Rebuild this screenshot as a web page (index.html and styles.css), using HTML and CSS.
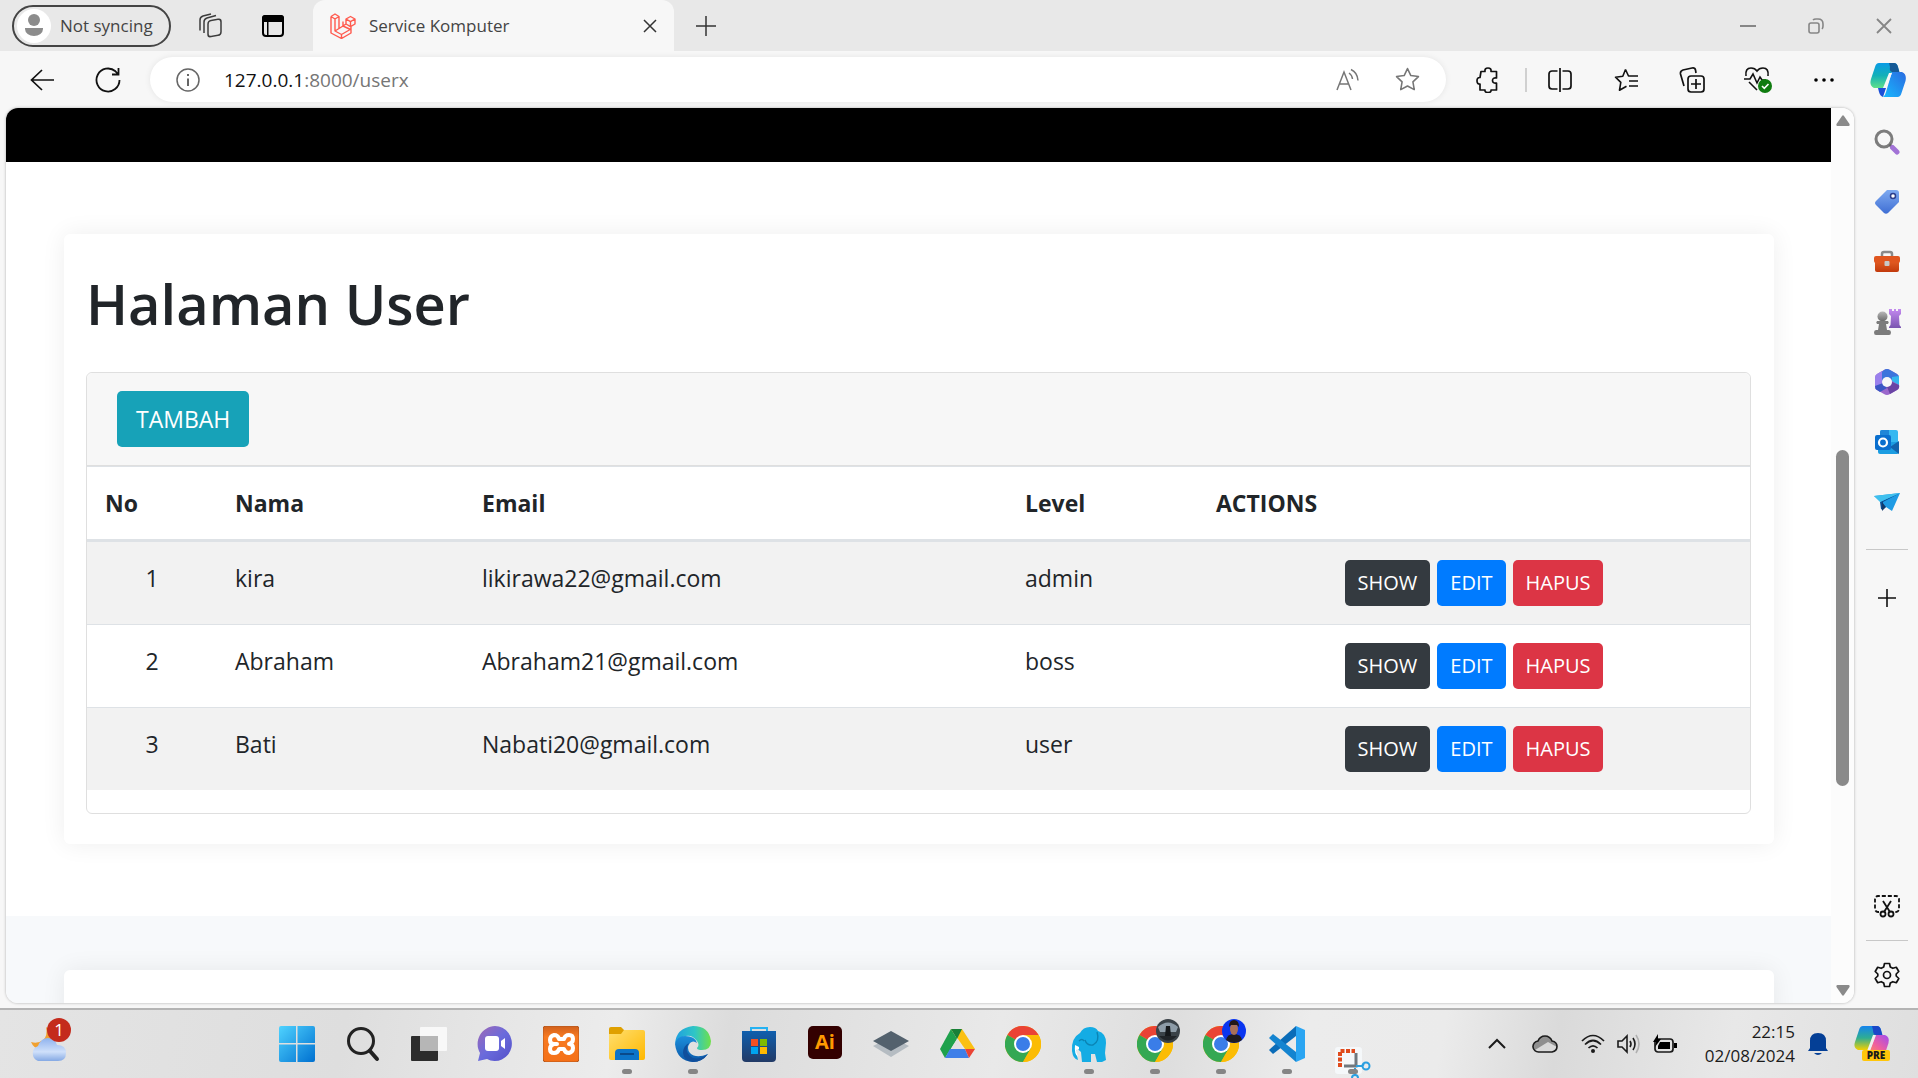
FILE: index.html
```html
<!DOCTYPE html>
<html lang="id">
<head>
<meta charset="utf-8">
<title>Service Komputer</title>
<link rel="stylesheet" href="styles.css">
</head>
<body>
<svg class="defs" aria-hidden="true">
  <defs>
    <linearGradient id="g-win" x1="0" y1="0" x2="1" y2="1"><stop offset="0" stop-color="#4fd3ff"/><stop offset="1" stop-color="#0070d0"/></linearGradient>
    <linearGradient id="g-cp1" x1="0" y1="0" x2="0" y2="1"><stop offset="0" stop-color="#0a9be6"/><stop offset=".5" stop-color="#12b0b8"/><stop offset="1" stop-color="#5fe08a"/></linearGradient>
    <linearGradient id="g-cp2" x1="1" y1="0" x2="0" y2="1"><stop offset="0" stop-color="#2a6be0"/><stop offset="1" stop-color="#17b9ff"/></linearGradient>
    <linearGradient id="g-pre1" x1="0" y1="0" x2="0" y2="1"><stop offset="0" stop-color="#1584ee"/><stop offset=".5" stop-color="#2fae92"/><stop offset="1" stop-color="#f4d000"/></linearGradient>
    <linearGradient id="g-pre2" x1="1" y1="0" x2="0" y2="1"><stop offset="0" stop-color="#a04bf0"/><stop offset=".6" stop-color="#ee5fa0"/><stop offset="1" stop-color="#ff8a5c"/></linearGradient>
    <linearGradient id="g-purple" x1="0" y1="0" x2="0" y2="1"><stop offset="0" stop-color="#c48af0"/><stop offset="1" stop-color="#7a55b0"/></linearGradient>
    <linearGradient id="g-grey" x1="0" y1="0" x2="0" y2="1"><stop offset="0" stop-color="#b8b8b8"/><stop offset="1" stop-color="#6a6a6a"/></linearGradient>
    <linearGradient id="g-tag" x1="0" y1="0" x2="0" y2="1"><stop offset="0" stop-color="#7eaaf0"/><stop offset="1" stop-color="#3f6ed4"/></linearGradient>
    <linearGradient id="g-box" x1="0" y1="0" x2="0" y2="1"><stop offset="0" stop-color="#ee6a2c"/><stop offset="1" stop-color="#c23a0c"/></linearGradient>
    <linearGradient id="g-chat" x1="0" y1="0" x2="1" y2="1"><stop offset="0" stop-color="#a068b4"/><stop offset=".5" stop-color="#6a6bdc"/><stop offset="1" stop-color="#5450c8"/></linearGradient>
    <linearGradient id="g-folder" x1="0" y1="0" x2="1" y2="1"><stop offset="0" stop-color="#ffdf70"/><stop offset="1" stop-color="#ffb800"/></linearGradient>
    <linearGradient id="g-cloud" x1="0" y1="0" x2="0" y2="1"><stop offset="0" stop-color="#8fb2ee"/><stop offset=".6" stop-color="#cfe0fa"/><stop offset="1" stop-color="#85a9e4"/></linearGradient>
    <linearGradient id="g-edge1" x1="0" y1="0" x2="1" y2="0"><stop offset="0" stop-color="#1f9fe0"/><stop offset=".55" stop-color="#2fc6c6"/><stop offset="1" stop-color="#6fe04a"/></linearGradient>
    <linearGradient id="g-edge2" x1="0" y1="0" x2="0" y2="1"><stop offset="0" stop-color="#1c8fdc"/><stop offset="1" stop-color="#0c58a8"/></linearGradient>
    <linearGradient id="g-store" x1="0" y1="0" x2="0" y2="1"><stop offset="0" stop-color="#0f5fae"/><stop offset="1" stop-color="#223a66"/></linearGradient>
    <linearGradient id="g-xampp" x1="0" y1="0" x2="0" y2="1"><stop offset="0" stop-color="#d0601c"/><stop offset=".3" stop-color="#f87a20"/><stop offset="1" stop-color="#f47018"/></linearGradient>
  </defs>
  <symbol id="chrome" viewBox="0 0 36 36">
    <circle cx="18" cy="18" r="18" fill="#fbbc04"/>
    <path d="M18 18 2.400 9A18 18 0 0 1 33.600 9z" fill="#ea4335"/>
    <path d="M33.600 9H18l-8 4z" fill="#ea4335"/>
    <path d="M2.400 9A18 18 0 0 0 18 36l7.800-13.500L18 18z" fill="#34a853"/>
    <path d="M18 36l7.800-13.500V13.500L18 9h15.600A18 18 0 0 1 18 36z" fill="#fbbc04"/>
    <circle cx="18" cy="18" r="9" fill="#fff"/><circle cx="18" cy="18" r="7" fill="#3a7de8"/>
  </symbol>
</svg>

<header class="tabbar">
  <button class="profile"><span class="avatar"><svg viewBox="0 0 34 34"><circle cx="17" cy="17" r="17" fill="#fff"/><circle cx="17" cy="11" r="6" fill="#8c8c8c"/><path d="M8 19h18v1a9 7 0 0 1-18 0z" fill="#8c8c8c"/></svg></span>Not syncing</button>
  <button class="icon-btn tab-tool" aria-label="Workspaces"><svg width="26" height="26" viewBox="0 0 26 26" fill="none" stroke="#3c3c3c" stroke-width="1.500"><rect x="11" y="7" width="13" height="16" rx="3" transform="skewY(-10) translate(0 3)"/><path d="M7 20V9q0-3 3-4l9-2.500M3 17.500V7q0-3 3-4l8-2"/></svg></button>
  <button class="icon-btn tab-tool" aria-label="Tab actions"><svg width="24" height="24" viewBox="0 0 24 24"><rect x="2" y="2" width="20" height="20" rx="3" fill="none" stroke="#000" stroke-width="2"/><path d="M1 8V4a3 3 0 0 1 3-3h16a3 3 0 0 1 3 3v4zM6 8h1.500v14H6z"/></svg></button>
  <div class="tab">
    <svg width="26" height="26" viewBox="0 0 26 26" fill="none" stroke="#ff5a4e" stroke-width="1.400" stroke-linejoin="round"><path d="M1 3.500 5 1l4 2.500v12l4-2.500V8.500M1 3.500V20l10.500 5.500L21 20v-6M1 3.500 5 6l4-2.500M5 6v12l6.500 3.500L21 16M16 6l4.500-2.500L25 6v5l-4.500 2.700L16 11zM16 6l4.500 2.700L25 6M20.500 8.700v5M9 15.500l-4 2.500M13 13l7.500 3.500M11.500 21.500v4M16 11l-3 2"/></svg>
    <span class="tab-title">Service Komputer</span>
    <button class="icon-btn" aria-label="Close tab"><svg width="14" height="14" viewBox="0 0 14 14" stroke="#333" stroke-width="1.500"><path d="M1 1l12 12M13 1 1 13"/></svg></button>
  </div>
  <button class="icon-btn tab-tool" aria-label="New tab"><svg width="20" height="20" viewBox="0 0 20 20" stroke="#333" stroke-width="1.500"><path d="M10 0v20M0 10h20"/></svg></button>
  <div class="window-controls">
    <button class="icon-btn" aria-label="Minimize"><svg width="16" height="16" viewBox="0 0 16 16" stroke="#868686" stroke-width="2"><path d="M0 8h16"/></svg></button>
    <button class="icon-btn" aria-label="Restore"><svg width="16" height="16" viewBox="0 0 16 16" fill="none" stroke="#868686" stroke-width="1.600"><rect x="1" y="5" width="10" height="10" rx="2"/><path d="M5 2q1-1 3-1h2q5 0 5 5v2q0 2-1 3"/></svg></button>
    <button class="icon-btn" aria-label="Close"><svg width="16" height="16" viewBox="0 0 16 16" stroke="#868686" stroke-width="1.800"><path d="M1 1l14 14M15 1 1 15"/></svg></button>
  </div>
</header>

<div class="toolbar">
  <button class="icon-btn nav-btn" aria-label="Back"><svg width="24" height="22" viewBox="0 0 24 22" fill="none" stroke="#111" stroke-width="1.700"><path d="M12 1 1.500 11 12 21M1.500 11H24"/></svg></button>
  <button class="icon-btn nav-btn" aria-label="Reload"><svg width="26" height="26" viewBox="0 0 26 26" fill="none" stroke="#111" stroke-width="1.800"><path d="M24.500 13A11.500 11.500 0 1 1 20.500 4.300L23.500 7.500M23.500 1v6.500H17"/></svg></button>
  <div class="address">
    <svg width="24" height="24" viewBox="0 0 24 24" fill="none" stroke="#666" stroke-width="1.500"><circle cx="12" cy="12" r="11"/><path d="M12 10.500v7.500M12 6v2" stroke-width="2"/></svg>
    <span class="url"><b>127.0.0.1</b>:8000/userx</span>
    <button class="icon-btn" aria-label="Read aloud"><svg width="24" height="24" viewBox="0 0 24 24" fill="none" stroke="#767676" stroke-width="1.500"><path d="M1 22 8 4l7 18M3.500 16h9M13 5q3 2 3.500 6M15 1.500q6.500 3 7 11"/></svg></button>
    <button class="icon-btn" aria-label="Favorite"><svg width="25" height="25" viewBox="0 0 24 24" fill="none" stroke="#767676" stroke-width="1.500" stroke-linejoin="round"><path d="m12 1.500 3.200 6.700 7.300 1-5.300 5.100 1.300 7.400L12 18.200l-6.500 3.500 1.300-7.400L1.500 9.200l7.300-1z"/></svg></button>
  </div>
  <button class="icon-btn ext" aria-label="Extensions"><svg width="24" height="26" viewBox="0 0 24 26" fill="none" stroke="#111" stroke-width="1.700" stroke-linejoin="round"><path d="M5 4.500h4q-.500-3.500 3-3.500t3 3.500h5.500V11q-4-.500-4 2.500t4 2.500v7H15q.500 2.500-3 2.500T9 23H4v-6q-3 .300-3-3.200T4 10.500z"/></svg></button>
  <span class="separator"></span>
  <button class="icon-btn tool" aria-label="Split screen"><svg width="24" height="24" viewBox="0 0 24 24" fill="none" stroke="#111" stroke-width="1.700"><path d="M9.500 3H4a3 3 0 0 0-3 3v12a3 3 0 0 0 3 3h5.500M14.500 3H20a3 3 0 0 1 3 3v12a3 3 0 0 1-3 3h-5.500M12 0v24"/></svg></button>
  <button class="icon-btn tool" aria-label="Favorites"><svg width="25" height="24" viewBox="0 0 25 24" fill="none" stroke="#111" stroke-width="1.600" stroke-linejoin="round"><path d="M11.500 1.500 8.800 8.200l-7.300 1 5.300 5.100-1.300 7.900 7-4M11.500 1.500 14.500 8H24M15 13h9M15 18h9"/></svg></button>
  <button class="icon-btn tool" aria-label="Collections"><svg width="26" height="26" viewBox="0 0 26 26" fill="none" stroke="#111" stroke-width="1.700"><rect x="9" y="9" width="16" height="16" rx="3"/><path d="M17 12v10M12 17h10M5 19 1.500 7Q1 4 4 3l9-2q3-.500 3.500 2l.500 3"/></svg></button>
  <button class="icon-btn tool" aria-label="Browser essentials"><svg width="28" height="28" viewBox="0 0 28 28" fill="none" stroke="#111" stroke-width="1.600"><path d="M2 10Q1 2 7 2q4 0 6 3 2-3 6-3 6 0 5 8M0 13h6l3-5 4 9 3-6 2 3h4M5 16l8 8"/><circle cx="21" cy="20" r="7" fill="#107c10" stroke="none"/><path d="m18 20 2.300 2.300L24.500 18" stroke="#fff"/></svg></button>
  <button class="icon-btn tool" aria-label="Settings and more"><svg width="20" height="6" viewBox="0 0 20 6"><circle cx="2" cy="3" r="1.800"/><circle cx="10" cy="3" r="1.800"/><circle cx="18" cy="3" r="1.800"/></svg></button>
  <button class="icon-btn copilot" aria-label="Copilot"><svg width="36" height="36" viewBox="0 0 36 34"><path d="M9 0h15q3 0 4 4l1 5h-7L15 25H4q-5-2-3-9L5 4Q6 0 9 0z" fill="url(#g-cp1)"/><path d="M19 0h5q3 0 4 4l1.500 5H22q-3-1-2-5z" fill="#155a96"/><path d="M8 25h8l-3 9q-3-1-4-5z" fill="#1a4fd8"/><path d="M22 9h10q5 2 3.500 9l-4 12q-1 4-4 4H13q2-1 3-5z" fill="url(#g-cp2)"/><path d="M19 10h3l-6 15h-3z" fill="#f7f7f7"/></svg></button>
</div>

<div class="workspace">
  <div class="viewport">
    <main class="page">
      <div class="navband"></div>
      <section class="section">
        <div class="panel">
          <h1>Halaman User</h1>
          <div class="card">
            <div class="card-header"><button class="btn btn-info">TAMBAH</button></div>
            <table>
              <colgroup><col class="c-no"><col class="c-nama"><col class="c-email"><col class="c-level"><col class="c-act"></colgroup>
              <thead><tr><th>No</th><th>Nama</th><th>Email</th><th>Level</th><th>ACTIONS</th></tr></thead>
              <tbody>
                <tr><td class="center">1</td><td>kira</td><td>likirawa22@gmail.com</td><td>admin</td><td><div class="actions"><button class="btn btn-sm btn-dark">SHOW</button><button class="btn btn-sm btn-primary">EDIT</button><button class="btn btn-sm btn-danger">HAPUS</button></div></td></tr>
                <tr><td class="center">2</td><td>Abraham</td><td>Abraham21@gmail.com</td><td>boss</td><td><div class="actions"><button class="btn btn-sm btn-dark">SHOW</button><button class="btn btn-sm btn-primary">EDIT</button><button class="btn btn-sm btn-danger">HAPUS</button></div></td></tr>
                <tr><td class="center">3</td><td>Bati</td><td>Nabati20@gmail.com</td><td>user</td><td><div class="actions"><button class="btn btn-sm btn-dark">SHOW</button><button class="btn btn-sm btn-primary">EDIT</button><button class="btn btn-sm btn-danger">HAPUS</button></div></td></tr>
              </tbody>
            </table>
          </div>
        </div>
      </section>
      <section class="section section-alt"><div class="panel panel-next"></div></section>
    </main>
    <div class="scrollbar">
      <svg width="14" height="11" viewBox="0 0 14 11" fill="#8a8a8a"><path d="M6 1q1-1.500 2 0l5.500 8q.500 2-1 2h-11q-1.500 0-1-2z"/></svg>
      <span class="thumb"></span>
      <svg width="14" height="11" viewBox="0 0 14 11" fill="#8a8a8a"><path d="M6 10q1 1.500 2 0l5.500-8q.500-2-1-2h-11Q0 0 .500 2z"/></svg>
    </div>
  </div>

  <aside class="sidebar">
    <button class="icon-btn" aria-label="Search"><svg width="26" height="26" viewBox="0 0 26 26" fill="none"><circle cx="10" cy="10" r="8" stroke="#7c7c7c" stroke-width="3"/><path d="m15.500 15.500 3 3" stroke="#666" stroke-width="2.500"/><path d="m18.500 18.500 4.500 4.500" stroke="#a273d6" stroke-width="5" stroke-linecap="round"/></svg></button>
    <button class="icon-btn" aria-label="Shopping"><svg width="26" height="26" viewBox="0 0 26 26"><path d="M13 1h9q3 0 3 3v9L14 24q-2 1.500-4 0L2 16q-2-2 0-4z" fill="url(#g-tag)"/><circle cx="19" cy="7" r="2.500" fill="#fff" stroke="#2c3e8c" stroke-width="1.500"/></svg></button>
    <button class="icon-btn" aria-label="Tools"><svg width="28" height="24" viewBox="0 0 28 24"><path d="M9 7V4q0-2 2-2h6q2 0 2 2v3" fill="none" stroke="#8a8a8a" stroke-width="2.500"/><rect x="2" y="7" width="24" height="15" rx="2" fill="url(#g-box)"/><rect x="1" y="6" width="26" height="7" rx="2" fill="#e0561f"/><rect x="11.500" y="11" width="5" height="5" rx="1" fill="#c8c8c8"/></svg></button>
    <button class="icon-btn" aria-label="Games"><svg width="28" height="28" viewBox="0 0 28 28"><path d="M16 1h3v2h2V1h2v2h2V1h3v5l-2 2 .500 9 1.500 2v1H16v-1l1.500-2L18 8l-2-2z" fill="url(#g-purple)"/><circle cx="9.500" cy="8.500" r="5" fill="url(#g-grey)"/><path d="M4 13h11q1.500 1.500 0 3h-2l1 6h2q2 0 2 2.500T16 27H3q-2 0-2-2.500T3 22h2l1-6H4q-1.500-1.500 0-3z" fill="#7c7c7c"/></svg></button>
    <button class="icon-btn" aria-label="Microsoft 365"><svg width="26" height="28" viewBox="0 0 26 28"><path d="M10 2q3-2 6 0l7 4q2 1 2 4v8q0 3-2 4l-7 4q-3 2-6 0l-7-4q-2-1-2-4v-8q0-3 2-4z" fill="#9b68cc"/><path d="M1 17V10q0-3 2-4l5-3v16l-5 3q-2-1-2-5z" fill="#9a80ec"/><path d="M10 2q3-2 6 0l7 4q2 1 2 4v6l-7-4-5-3-5 4V4z" fill="#3c74dc"/><path d="m18 9 7-1v9l-7-4z" fill="#35b6ee"/><path d="m18 14 7 3q1 3-2 5l-7 4-3-7z" fill="#6a44a4"/><path d="M1 18l8-3 4 5-7 4-3-2q-2-1-2-4z" fill="#3b56c4"/><circle cx="13" cy="14" r="5" fill="#f7f7f7"/></svg></button>
    <button class="icon-btn" aria-label="Outlook"><svg width="26" height="26" viewBox="0 0 26 26"><rect x="6" y="1" width="18" height="20" rx="2" fill="#35b8f1"/><path d="M6 3q0-2 2-2h7v7H6z" fill="#1f86d8"/><path d="M4 13h21v10q0 2-2 2H6q-2 0-2-2z" fill="#1b9de2"/><path d="m25 12-9 6 9 7z" fill="#1263ac"/><rect x="1" y="6" width="16" height="15" rx="2" fill="#0a6fce"/><circle cx="9" cy="13.500" r="4" fill="none" stroke="#fff" stroke-width="2.200"/></svg></button>
    <button class="icon-btn" aria-label="Drop"><svg width="26" height="20" viewBox="0 0 26 20"><path d="M0 4 26 1 18 19l-6-4-4 3-1-8z" fill="#1f9be4"/><path d="M26 1 9 10v8l-2-1-1-7z" fill="#0b4f94"/><path d="M0 4 26 1 6 10z" fill="#3fc0ee"/><path d="m12 15-4 4V10z" fill="#123a6c"/></svg></button>
    <hr>
    <button class="icon-btn" aria-label="Customize"><svg width="18" height="18" viewBox="0 0 18 18" stroke="#111" stroke-width="1.600"><path d="M9 0v18M0 9h18"/></svg></button>
    <span class="grow"></span>
    <button class="icon-btn" aria-label="Screenshot"><svg width="26" height="24" viewBox="0 0 26 24" fill="none" stroke="#111" stroke-width="1.800"><path d="M5 18H4a3 3 0 0 1-3-3V5a3 3 0 0 1 3-3h18a3 3 0 0 1 3 3v10a3 3 0 0 1-3 3h-1" stroke-dasharray="4 2"/><path d="m9 7 7 11M17 7l-7 11"/><circle cx="9" cy="20" r="2.500"/><circle cx="17" cy="20" r="2.500"/></svg></button>
    <hr>
    <button class="icon-btn" aria-label="Settings"><svg width="26" height="26" viewBox="0 0 26 26" fill="none" stroke="#111" stroke-width="1.700" stroke-linejoin="round"><path d="M10.500 1.500h5l.800 3.500 2.500 1.300 3.500-1 2.500 4.200-2.600 2.500v2l2.600 2.500-2.500 4.200-3.500-1-2.500 1.300-.800 3.500h-5L9.700 21l-2.500-1.300-3.500 1-2.500-4.200L3.800 14v-2L1.200 9.500l2.500-4.200 3.500 1L9.700 5z"/><circle cx="13" cy="13" r="3.500"/></svg></button>
  </aside>
</div>

<footer class="taskbar">
  <button class="icon-btn weather" aria-label="Weather"><svg width="36" height="36" viewBox="0 0 36 36"><path d="M16 1q2 9-3 13T1 16q3 7 9 7l12-3q4-12-6-19z" fill="#f0a030"/><path d="M8 35a8 8 0 0 1 0-15q3-8 10-8t9 7q9 0 9 8t-8 8z" fill="url(#g-cloud)"/></svg><span class="badge">1</span></button>
  <nav class="apps">
    <button class="icon-btn" aria-label="Start"><svg width="36" height="36" viewBox="0 0 36 36" fill="url(#g-win)"><path d="M2 0h15v17H0V2q0-2 2-2zM18.500 0H34q2 0 2 2v15H18.500zM0 18.500h17V36H2q-2 0-2-2zM18.500 18.500H36V34q0 2-2 2H18.500z"/></svg></button>
    <button class="icon-btn" aria-label="Search"><svg width="36" height="36" viewBox="0 0 36 36" fill="none" stroke="#222"><circle cx="16" cy="15" r="12.500" stroke-width="3"/><path d="m25 25 7 8" stroke-width="4" stroke-linecap="round"/></svg></button>
    <button class="icon-btn" aria-label="Task view"><svg width="36" height="36" viewBox="0 0 36 36"><rect x="0" y="10" width="27" height="25" rx="1" fill="#2c2c2c"/><rect x="9" y="1" width="27" height="24" rx="1" fill="#f8f8f8"/><path d="M9 10h18v15H9z" fill="#b6b6b6"/></svg></button>
    <button class="icon-btn" aria-label="Chat"><svg width="36" height="36" viewBox="0 0 36 36"><path d="M18 0a17 17.500 0 1 1-8 33L1 35l2-8A18 18 0 0 1 18 0z" fill="url(#g-chat)"/><rect x="8" y="10" width="14" height="15" rx="3" fill="#fff"/><path d="m24 15 4-3v11l-4-3z" fill="#fff"/></svg></button>
    <button class="icon-btn" aria-label="XAMPP"><svg width="36" height="36" viewBox="0 0 36 36"><rect x="0" y="0" width="36" height="36" rx="3" fill="url(#g-xampp)" stroke="#b4561c"/><path d="M16 13q-1-4-5-4-4 1-4 5t4 4q-4 1-4 5t4 4q4 0 5-4h5q1 4 5 4 4-1 4-5t-4-4q4-1 4-5t-4-4q-4 0-5 4zM11 18h3" fill="none" stroke="#fff" stroke-width="4" stroke-linejoin="round" stroke-linecap="round"/></svg></button>
    <button class="icon-btn running" aria-label="File Explorer"><svg width="36" height="36" viewBox="0 0 36 36"><path d="M0 3q0-2 2-2h10l4 4v8H0z" fill="#dfa000"/><path d="M0 8h12l3-4h19q2 0 2 2v26q0 2-2 2H2q-2 0-2-2z" fill="url(#g-folder)"/><path d="M6 34V27q0-4 4-4h16q4 0 4 4v7z" fill="#0c74c8"/><path d="M11 28h14" stroke="#0a4a8a" stroke-width="2"/></svg></button>
    <button class="icon-btn running" aria-label="Edge"><svg width="36" height="36" viewBox="0 0 36 36"><path d="M18 0q16 0 18 15 0 9-9 9-5 0-5-2 3-3 0-7-6-8-14-4Q2 14 0 18 1 2 18 0z" fill="url(#g-edge1)"/><path d="M0 18Q2 10 10 10q10 0 12 7-4-3-7 0-4 5 0 10 6 6 18 1-6 8-15 8Q2 35 0 18z" fill="url(#g-edge2)"/><path d="M14 17q-5 7 1 13t18-2q-6 8-15 8-9-1-10-9 0-7 6-10z" fill="#104f9c"/></svg></button>
    <button class="icon-btn" aria-label="Store"><svg width="36" height="36" viewBox="0 0 36 36"><path d="M10 7V2h16v5" fill="none" stroke="#25b2f2" stroke-width="2"/><path d="M1 5h34v27q0 4-4 4H5q-4 0-4-4z" fill="url(#g-store)"/><path d="M10 13h7v7h-7z" fill="#f25022"/><path d="M19 13h7v7h-7z" fill="#7fba00"/><path d="M10 21h7v7h-7z" fill="#00a4ef"/><path d="M19 21h7v7h-7z" fill="#ffb900"/></svg></button>
    <button class="icon-btn" aria-label="Illustrator"><svg width="36" height="36" viewBox="0 0 36 36"><rect x="1" y="0" width="34" height="33" rx="5" fill="#330000"/><text x="18" y="23" class="ai">Ai</text></svg></button>
    <button class="icon-btn" aria-label="Layers"><svg width="36" height="36" viewBox="0 0 36 36"><path d="m18 11 18 9-18 11L0 20z" fill="#b5bcc2"/><path d="m18 5 18 10-18 10L0 15z" fill="#53616d"/></svg></button>
    <button class="icon-btn" aria-label="Google Drive"><svg width="36" height="36" viewBox="0 0 36 36"><path d="M12 3 1 23l5 9 12-19z" fill="#1ea14c"/><path d="M23 3 12 3l14 20h10z" fill="#fbc012"/><path d="M12 3h11l-5 10z" fill="#188038"/><path d="M11 23h15l4 9H6z" fill="#3f7fe8"/><path d="M26 23h10l-6 9z" fill="#ea4335"/><path d="M18 13l6 10H12z" fill="#e2e2e2"/></svg></button>
    <button class="icon-btn" aria-label="Chrome"><svg width="36" height="36"><use href="#chrome"/></svg></button>
    <button class="icon-btn running" aria-label="Laragon"><svg width="36" height="36" viewBox="0 0 36 36"><path d="M9 7q3-6 10-6 6 0 8 4 8 2 8 12l-1 10 1 7-4 2h-5l-2-8h-4v8h-9l-1-10q-3-2-4-6l-1 5 2 9q-5-1-6-9Q0 12 9 7z" fill="#14ace4"/><path d="M26 6q3 9-4 13-6 1-8-5M8 15q3-3 5 0" fill="none" stroke="#0b84b4" stroke-width="1.400"/><path d="m4 19 4 2v2l-3 1 2 7q-4-3-3-12z" fill="#fff"/></svg></button>
    <button class="icon-btn running" aria-label="Chrome profile"><svg width="36" height="36"><use href="#chrome"/></svg><svg class="face" viewBox="0 0 24 24"><circle cx="12" cy="12" r="12" fill="#3a4248"/><path d="M2 8q10-9 20 0l-2 5H4z" fill="#8d9ca8"/><path d="M10 7h4l1 10H9z" fill="#15181b"/><path d="M3 17h18q-9 9-18 0z" fill="#202428"/></svg></button>
    <button class="icon-btn running" aria-label="Chrome profile 2"><svg width="36" height="36"><use href="#chrome"/></svg><svg class="face" viewBox="0 0 24 24"><circle cx="12" cy="12" r="12" fill="#0a35f0"/><path d="M4 21q1-6 8-6t8 6q-8 6-16 0z" fill="#201c20"/><ellipse cx="12" cy="10" rx="4" ry="6" fill="#a8705a"/><path d="M7 8q0-7 5-7t5 7l-2-2H9z" fill="#241818"/></svg></button>
    <button class="icon-btn running" aria-label="Visual Studio Code"><svg width="36" height="36" viewBox="0 0 36 36"><path d="m27 0 9 4v28l-9 4z" fill="#2aa5f2"/><path d="M27 0v10L4 28l-4-4z" fill="#0a6cb8"/><path d="m0 12 4-4 23 18v10z" fill="#1484d0"/></svg></button>
    <button class="icon-btn running snip" aria-label="Snipping Tool"><svg width="36" height="36" viewBox="0 0 36 36"><rect x="0" y="3" width="27" height="27" rx="3" fill="#f5f8fa"/><path d="M5 23V7h15" fill="none" stroke="#e04a1c" stroke-width="4" stroke-dasharray="4 1.500"/><path d="M21 9v13H9" fill="none" stroke="#70787e" stroke-width="3"/><path d="M21 22h6l2-2M20 24v8" fill="none" stroke="#2a9fe0" stroke-width="2"/><circle cx="31" cy="22" r="3.500" fill="none" stroke="#2a9fe0" stroke-width="2"/><circle cx="20" cy="34" r="3" fill="none" stroke="#2a9fe0" stroke-width="2"/></svg></button>
  </nav>
  <div class="tray">
    <button class="icon-btn" aria-label="Hidden icons"><svg width="18" height="12" viewBox="0 0 18 12" fill="none" stroke="#1b1b1b" stroke-width="2"><path d="m1 10 8-8 8 8"/></svg></button>
    <button class="icon-btn" aria-label="OneDrive"><svg width="26" height="18" viewBox="0 0 26 18"><path d="M7 17a5.500 5.500 0 0 1-1-11q2-5 7-5t7 5q5 1 5 5.500T20 17z" fill="#8f8f8f"/><path d="M3 15 16 7l9 5q0 5-5 5H7z" fill="#d9d9d9"/><path d="M7 17a5.500 5.500 0 0 1-1-11q2-5 7-5t7 5q5 1 5 5.500T20 17z" fill="none" stroke="#1b1b1b" stroke-width="1.600"/></svg></button>
    <button class="status" aria-label="Network, volume, battery">
      <svg width="24" height="20" viewBox="0 0 24 20" fill="none" stroke="#1b1b1b" stroke-width="1.700"><path d="M1 7q11-11 22 0M4 10.500q8-8 16 0M7.500 14q4.500-4.500 9 0"/><circle cx="12" cy="17" r="2" fill="#1b1b1b" stroke="none"/></svg>
      <svg width="24" height="20" viewBox="0 0 24 20" fill="none" stroke="#1b1b1b" stroke-width="1.600"><path d="M1 7h4l5-5v16l-5-5H1zM13 7q2 3 0 6M16 4q4 6 0 12"/><path d="M19 1q6 9 0 18" stroke="#b0b0b0"/></svg>
      <svg width="24" height="20" viewBox="0 0 24 20"><rect x="2" y="5" width="18" height="13" rx="3" fill="none" stroke="#1b1b1b" stroke-width="1.700"/><path d="M7 8h10v7H5v-3zM21 9h3v5h-3zM5 0 0 8h3l-1 5 6-8H5z"/></svg>
    </button>
    <button class="clock"><span>22:15</span><span>02/08/2024</span></button>
    <button class="icon-btn bell" aria-label="Notifications"><svg width="20" height="24" viewBox="0 0 20 24" fill="#043f96"><path d="M2 16V9q0-8 8-8t8 8v7l2 3H0zM6 21h8q-4 4-8 0z"/></svg></button>
    <button class="icon-btn pre" aria-label="Copilot preview"><svg width="36" height="36" viewBox="0 0 36 36"><path d="M9 0h14q3 0 4 4l1 5h-6L15 24H4q-5-2-3-8L5 4Q6 0 9 0z" fill="url(#g-pre1)"/><path d="M18 0h5q3 0 4 4l1.500 5H21q-2-1-2-5z" fill="#1a48c8"/><path d="M22 9h9q5 2 3.500 8l-3 9H15z" fill="url(#g-pre2)"/><path d="M19 9h3l-6 16h-3z" fill="#f0f0f0"/><rect x="8" y="24" width="28" height="11" rx="2" fill="#ffc60a"/><text x="22" y="33" class="pre-text">PRE</text></svg></button>
  </div>
</footer>
</body>
</html>
```
FILE: styles.css
```css
* { box-sizing: border-box; }

body {
  margin: 0;
  height: 100vh;
  display: flex;
  flex-direction: column;
  overflow: hidden;
  background: #f7f7f7;
  color: #212529;
  font-family: "Open Sans", "Noto Sans", sans-serif;
}

button {
  font: inherit;
  color: inherit;
  border: 0;
  padding: 0;
  background: none;
}

svg { display: block; flex: none; }
.defs { position: absolute; width: 0; height: 0; }
.icon-btn { display: flex; align-items: center; justify-content: center; flex: none; }

/* Tab strip */
.tabbar {
  flex: none;
  display: flex;
  align-items: center;
  height: 51px;
  padding-left: 12px;
  background: #e8e8e8;
  font-size: 17px;
  color: #444;
}
.profile {
  display: flex;
  align-items: center;
  gap: 9px;
  width: 159px;
  height: 42px;
  margin-right: 7px;
  padding-left: 3px;
  border: 2px solid #444;
  border-radius: 21px;
  white-space: nowrap;
}
.avatar { width: 34px; height: 34px; }
.tab-tool { width: 63px; height: 100%; }
.tab {
  align-self: stretch;
  display: flex;
  align-items: center;
  gap: 13px;
  width: 361px;
  margin-left: 9px;
  padding: 0 17px;
  border-radius: 12px 12px 0 0;
  background: #f7f7f7;
}
.tab-title { flex: 1; }
.window-controls { display: flex; margin-left: auto; }
.window-controls .icon-btn { width: 68px; height: 50px; }

/* Address toolbar */
.toolbar {
  flex: none;
  display: flex;
  align-items: center;
  height: 57px;
  padding-left: 9px;
}
.nav-btn { width: 66px; }
.address {
  flex: 1;
  display: flex;
  align-items: center;
  height: 45px;
  margin: 0 5px 0 9px;
  padding: 0 26px;
  border-radius: 23px;
  background: #fff;
  box-shadow: 0 0 6px rgba(0, 0, 0, .08);
  font-size: 19px;
  color: #767676;
}
.url { flex: 1; margin-left: 24px; }
.url b { font-weight: 400; color: #111; }
.address .icon-btn { margin-left: 35px; }
.ext { width: 74px; }
.separator { width: 2px; height: 24px; background: #d0d0d0; }
.tool { width: 66px; }
.copilot { width: 61px; }

/* Page and browser side bar */
.workspace { flex: 1; display: flex; min-height: 0; }
.viewport {
  flex: 1;
  display: flex;
  min-width: 0;
  margin: 0 0 5px 6px;
  border-radius: 12px;
  overflow: hidden;
  background: #fff;
  box-shadow: 0 0 3px rgba(0, 0, 0, .3);
}
.page { flex: 1; min-width: 0; overflow: hidden; }
.navband { height: 54px; background: #000; }
.section { padding: 72px 57px 72px 58px; }
.section-alt { padding-top: 54px; background: #f7f9fb; }
.panel {
  padding: 33px 23px 30px 22px;
  border-radius: 6px;
  background: #fff;
  box-shadow: 0 0 24px rgba(0, 0, 0, .07);
}
.panel-next { height: 400px; }
h1 { margin: 0 0 33px; font-size: 56px; line-height: 72px; font-weight: 600; }

.card { border: 1px solid #dfdfdf; border-radius: 6px; padding-bottom: 23px; }
.card-header {
  padding: 18px 30px;
  background: #f7f7f7;
  border-bottom: 1px solid #dfdfdf;
  border-radius: 6px 6px 0 0;
}
.btn { border-radius: 5px; color: #fff; font-size: 23px; line-height: 36px; }
.btn-info { padding: 10px 19px; background: #17a2b8; }
.btn-sm { padding: 8px 13px; font-size: 20px; line-height: 30px; border-radius: 5px; }
.btn-dark { background: #343a40; }
.btn-primary { background: #007bff; }
.btn-danger { background: #dc3545; }
.actions { display: flex; justify-content: center; gap: 7px; }

table {
  width: 100%;
  table-layout: fixed;
  border-collapse: collapse;
  font-size: 23px;
  line-height: 36px;
}
.c-no { width: 130px; }
.c-nama { width: 247px; }
.c-level { width: 191px; }
.c-act { width: 552px; }
th, td { padding: 18px; text-align: left; vertical-align: top; border-top: 1px solid #dee2e6; }
thead th { border-bottom: 3px solid #dee2e6; font-weight: 700; }
tbody tr:nth-child(odd) { background: #f2f2f2; }
td.center { text-align: center; }

.scrollbar {
  flex: none;
  width: 23px;
  display: flex;
  flex-direction: column;
  align-items: center;
  padding: 7px 0;
  background: #fcfcfc;
}
.thumb { width: 13px; height: 336px; margin: 324px 0 auto; border-radius: 7px; background: #8a8a8a; }

.sidebar {
  flex: none;
  width: 64px;
  display: flex;
  flex-direction: column;
  align-items: center;
  padding: 4px 0 3px 2px;
}
.sidebar .icon-btn { width: 60px; height: 60px; }
.sidebar hr { width: 42px; margin: 17px 0 18px; border: 0; border-top: 1px solid #c8c8c8; }
.grow { flex: 1; }
.grow ~ hr { margin: 4px 0; }

/* Taskbar */
.taskbar {
  flex: none;
  display: flex;
  align-items: center;
  height: 70px;
  border-top: 2px solid #b4b4b4;
  background: linear-gradient(100deg, #e4e4e4, #dedede 18%, #ececec 32%, #dcdcdc 38%, #e9e9e9 52%, #dedede 61%, #ececec 68%, #ebebeb 75%, #dadada 81%, #e8e8e8 90%, #dfdfdf);
  color: #1b1b1b;
}
.weather { position: relative; width: 96px; }
.badge {
  position: absolute;
  top: -8px;
  right: 25px;
  width: 24px;
  height: 24px;
  border-radius: 50%;
  background: #c42b1c;
  color: #fff;
  font-size: 17px;
  line-height: 24px;
}
.apps { display: flex; margin-left: 168px; }
.apps .icon-btn { position: relative; width: 66px; height: 68px; }
.running::after {
  content: "";
  position: absolute;
  bottom: 4px;
  left: 28px;
  width: 10px;
  height: 5px;
  border-radius: 3px;
  background: #858585;
}
.face { position: absolute; top: 9px; right: 8px; width: 24px; height: 24px; }
.snip svg { margin-top: 36px; }
.ai { font-size: 20px; font-weight: 700; fill: #ff9a00; text-anchor: middle; }
.pre-text { font-size: 10px; font-weight: 800; fill: #1b1b1b; text-anchor: middle; }
.tray { display: flex; align-items: center; margin-left: auto; padding-right: 28px; }
.tray .icon-btn { width: 48px; }
.status { display: flex; gap: 12px; padding: 0 12px; }
.clock { display: flex; flex-direction: column; width: 106px; font-size: 17px; line-height: 24px; text-align: right; }
.tray .bell { width: 45px; }
.tray .pre { width: 36px; margin-left: 14px; }
```
